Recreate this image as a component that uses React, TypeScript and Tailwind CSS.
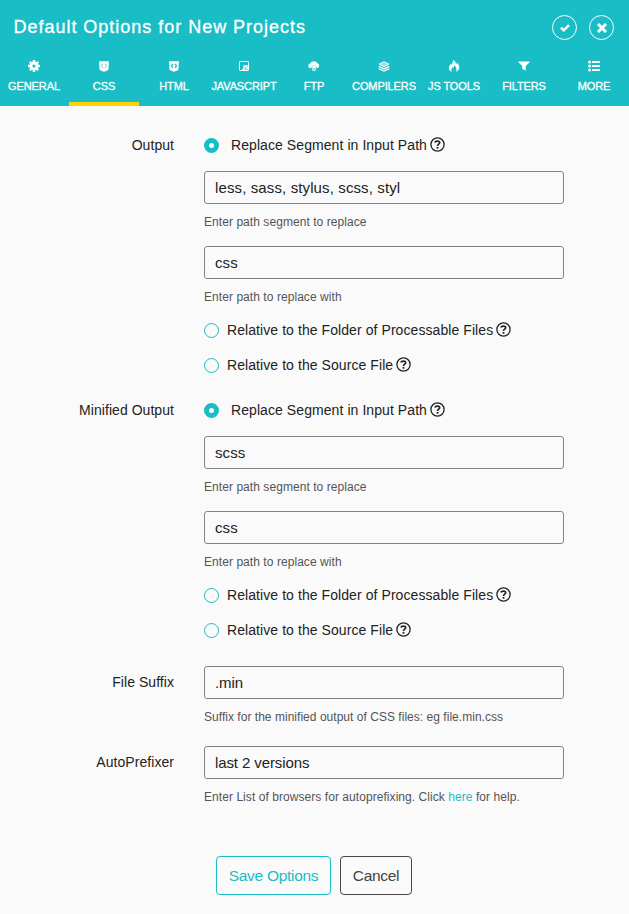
import React from "react";
import { ImFire } from "react-icons/im";

function GearIcon() {
  return (
    <svg width="12" height="12" viewBox="0 0 12 12" fill="none" stroke="#fff">
      <path
        d="M6 0v12M0 6h12M1.8 1.8l8.4 8.4M10.2 1.8l-8.4 8.4"
        strokeWidth="2.4"
      />
      <circle cx="6" cy="6" r="3.2" strokeWidth="2.4" />
      <circle cx="6" cy="6" r="1.6" fill="#18bdc5" stroke="none" />
    </svg>
  );
}

function ShieldIcon({ strong }: { strong?: boolean }) {
  return (
    <svg width="10" height="11" viewBox="0 0 10 11">
      <path d="M0 0.3h10l-.6 8.6L5 10.8.6 8.9z" fill="#fff" />
      <path
        d="M4 2.9L2.4 4.9l1.6 1.9M6 2.9l1.6 2-1.6 1.9"
        fill="none"
        stroke="#18bdc5"
        strokeWidth={strong ? 1.2 : 0.7}
      />
    </svg>
  );
}

function ScriptIcon() {
  return (
    <svg width="10" height="10" viewBox="0 0 10 10" fill="none" stroke="#fff">
      <rect x="0.5" y="0.5" width="9" height="9" rx="0.6" strokeWidth="1" />
      <path d="M5.2 4.3v3.6q0 .8-1.8.4M8.7 4.9q-2-.6-1.9.5 0 .7 1 .9 1 .3.8 1.2-.4.9-2.2.4" strokeWidth="1.4" />
    </svg>
  );
}

function CloudIcon() {
  return (
    <svg width="12" height="10" viewBox="0 0 12 10" fill="#fff">
      <path d="M2.7 7.3A2.4 2.4 0 0 1 2 2.6 4 3.6 0 0 1 9.4 2.3 2.6 2.6 0 0 1 9.3 7.3H8.8V6.4L6 4.2 3.2 6.4v.9z" />
      <path d="M6 4.2l2.6 2.8H7.6v2.8H4.4V7H3.4z" />
      <path d="M5.5 7h1v1.8h-1z" fill="#18bdc5" />
    </svg>
  );
}

function LayersIcon() {
  return (
    <svg width="12" height="11" viewBox="0 0 12 11" fill="none" stroke="#fff">
      <path d="M6 .8l5 2.4-5 2.4-5-2.4z" strokeWidth="1" fill="#fff" fillOpacity=".5" />
      <path d="M.7 5.4L6 7.9l5.3-2.5M.7 7.6L6 10.1l5.3-2.5" strokeWidth="1.3" />
    </svg>
  );
}

function FilterIcon() {
  return (
    <svg width="12" height="10" viewBox="0 0 12 10" fill="#fff">
      <path d="M.4.5h11.2v.7L7.7 5v4.5L4.3 8V5L.4 1.2z" />
    </svg>
  );
}

function ListIcon() {
  return (
    <svg width="12" height="12" viewBox="0 0 12 12" fill="#fff">
      <path d="M4 1h8v2H4zM4 5h8v2H4zM4 9h8v2H4z" />
      <circle cx="1.6" cy="2" r="1.5" />
      <circle cx="1.6" cy="6" r="1.5" />
      <circle cx="1.6" cy="10" r="1.5" />
    </svg>
  );
}

function CheckIcon() {
  return (
    <svg width="10" height="8" viewBox="0 0 10 8" fill="none" stroke="#fff" strokeWidth="2.5">
      <path d="M1 3.7l2.7 2.6L9 1.2" />
    </svg>
  );
}

function CrossIcon() {
  return (
    <svg width="10" height="10" viewBox="0 0 10 10" fill="none" stroke="#fff" strokeWidth="2.9">
      <path d="M1 1l8 8M9 1L1 9" />
    </svg>
  );
}

const tabs: { label: string; icon: React.ReactNode }[] = [
  { label: "GENERAL", icon: <GearIcon /> },
  { label: "CSS", icon: <ShieldIcon /> },
  { label: "HTML", icon: <ShieldIcon strong /> },
  { label: "JAVASCRIPT", icon: <ScriptIcon /> },
  { label: "FTP", icon: <CloudIcon /> },
  { label: "COMPILERS", icon: <LayersIcon /> },
  { label: "JS TOOLS", icon: <ImFire size={12} /> },
  { label: "FILTERS", icon: <FilterIcon /> },
  { label: "MORE", icon: <ListIcon /> },
];

function HelpIcon() {
  return (
    <svg className="mb-[2px] ml-[3px] shrink-0" width="15" height="15" viewBox="0 0 15 15" fill="none" stroke="#222">
      <circle cx="7.5" cy="7.5" r="6.6" strokeWidth="1.3" />
      <path d="M4.9 5.5C5.3 3.7 9.9 3.5 9.7 5.8 9.6 7.2 7.5 7.2 7.5 9" strokeWidth="1.7" />
      <path d="M7.5 10v1.7" strokeWidth="1.8" />
    </svg>
  );
}

function Radio({ label, checked, className = "" }: { label: string; checked?: boolean; className?: string }) {
  return (
    <div className={`flex h-[22px] items-center text-[14px] ${className}`}>
      <span
        className={`mt-px h-[15px] w-[15px] shrink-0 rounded-full border-[#18bdc5] ${
          checked ? "mr-[12px] border-[5px] bg-white" : "mr-[8px] border"
        }`}
      />
      <span className="tracking-[0.075px] whitespace-nowrap">{label}</span>
      <HelpIcon />
    </div>
  );
}

function Field({
  value,
  help,
  className = "",
  tracking = "",
  helpTracking = "tracking-[0.06px]",
}: {
  value: string;
  help: React.ReactNode;
  className?: string;
  tracking?: string;
  helpTracking?: string;
}) {
  return (
    <div className={className}>
      <div
        className={`flex h-[33px] w-[360px] items-center rounded-[3px] border border-[#828282] px-[10px] pt-px text-[15px] text-[#222] ${tracking}`}
      >
        {value}
      </div>
      <p className={`mt-[10px] h-4 text-[12px] leading-4 whitespace-nowrap text-[#555] ${helpTracking}`}>{help}</p>
    </div>
  );
}

function Row({ label, pad, className, children }: { label: string; pad?: boolean; className: string; children: React.ReactNode }) {
  return (
    <div className={`flex ${className}`}>
      <div className={`w-[174px] text-right text-[14px] leading-[22px] tracking-[0.05px] ${pad ? "pt-[5px]" : ""}`}>{label}</div>
      <div className="ml-[30px]">{children}</div>
    </div>
  );
}

function PathGroup({ segment }: { segment: string }) {
  return (
    <>
      <Radio label="Replace Segment in Input Path" checked />
      <Field className="mt-[15px]" tracking="tracking-[0.12px]" value={segment} help="Enter path segment to replace" />
      <Field className="mt-4" tracking="tracking-[0.12px]" value="css" help="Enter path to replace with" />
      <Radio className="mt-[14px]" label="Relative to the Folder of Processable Files" />
      <Radio className="mt-[13px]" label="Relative to the Source File" />
    </>
  );
}

export default function App() {
  return (
    <div className="h-[914px] w-[629px] overflow-hidden bg-[#fafafa] font-['Liberation_Sans',Arial,sans-serif] text-[#222]">
      <header className="flex h-[106px] flex-col bg-[#18bdc5] text-white">
        <div className="flex h-[54px] items-center pr-[15px] pl-[13.5px]">
          <h1 className="flex-1 text-[18px] tracking-[0.98px] [-webkit-text-stroke:0.3px_white]">Default Options for New Projects</h1>
          <button className="mt-px flex h-[25px] w-[25px] items-center justify-center rounded-full border border-white">
            <CheckIcon />
          </button>
          <button className="mt-px ml-[12px] flex h-[25px] w-[25px] items-center justify-center rounded-full border border-white">
            <CrossIcon />
          </button>
        </div>
        <nav className="-ml-px grid h-[52px] w-[630px] grid-cols-9">
          {tabs.map((t) => (
            <div
              key={t.label}
              className={`flex flex-col items-center border-b-4 ${t.label === "CSS" ? "border-[#ffd200]" : "border-transparent"}`}
            >
              <span className="flex h-6 items-center justify-center">{t.icon}</span>
              <span className="text-[11px] leading-4 tracking-[-0.1px] whitespace-nowrap [-webkit-text-stroke:0.3px_white]">
                {t.label}
              </span>
            </div>
          ))}
        </nav>
      </header>
      <main className="pt-[28px]">
        <Row label="Output" className="mb-[23px]">
          <PathGroup segment="less, sass, stylus, scss, styl" />
        </Row>
        <Row label="Minified Output" className="mb-[25px]">
          <PathGroup segment="scss" />
        </Row>
        <Row label="File Suffix" pad className="mb-[21px]">
          <Field
            tracking="tracking-[-0.1px]"
            helpTracking="tracking-[0.03px]"
            value=".min"
            help="Suffix for the minified output of CSS files: eg file.min.css"
          />
        </Row>
        <Row label="AutoPrefixer" pad className="mb-[51px]">
          <Field
            tracking="tracking-[-0.1px]"
            value="last 2 versions"
            help={
              <>
                Enter List of browsers for autoprefixing. Click <a className="text-[#18bdc5]">here</a> for help.
              </>
            }
          />
        </Row>
        <div className="flex gap-[9px] pl-[216px] text-[15.5px] tracking-[-0.3px]">
          <button className="h-[39px] w-[115px] rounded-[4px] border border-[#18bdc5] pt-px text-[#18bdc5]">Save Options</button>
          <button className="h-[39px] w-[72px] rounded-[4px] border border-[#444] pt-px text-[#444]">Cancel</button>
        </div>
      </main>
    </div>
  );
}
